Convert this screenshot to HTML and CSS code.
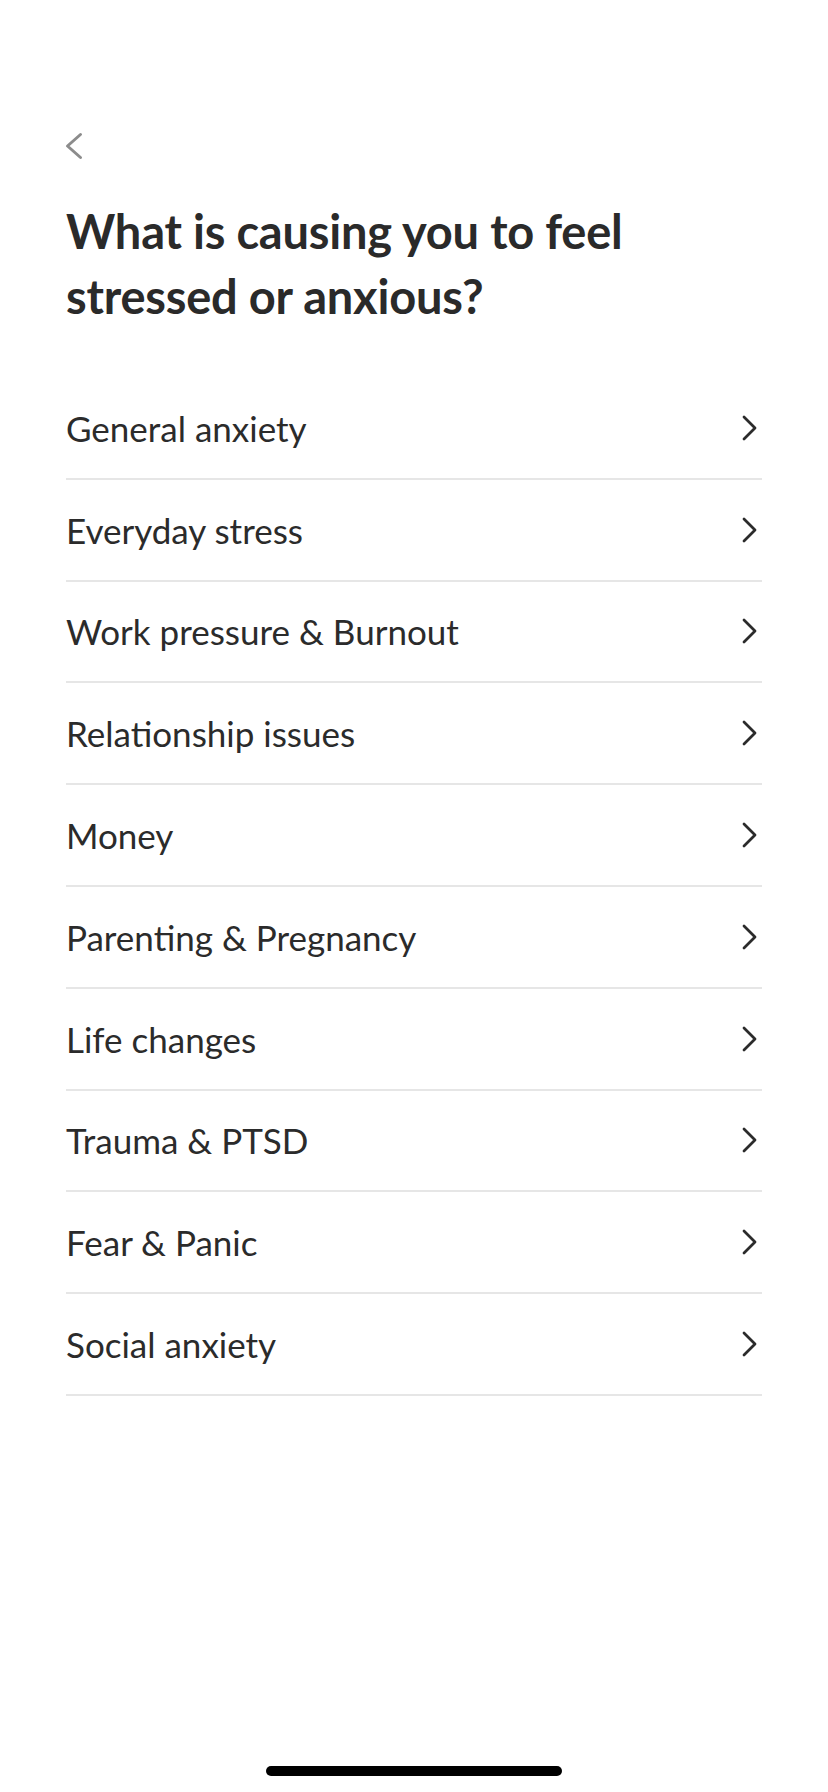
FILE: index.html
```html
<!DOCTYPE html>
<html lang="en">
<head>
  <meta charset="UTF-8" />
  <meta name="viewport" content="width=device-width, initial-scale=1.0" />
  <title>Stress & Anxiety</title>
  <link rel="stylesheet" href="styles.css">
</head>
<body>
  <div class="screen">
    <button class="back-btn" aria-label="Back">
      <svg width="18" height="28" viewBox="0 0 18 28">
        <polyline points="15.5,2.5 2.5,14 15.5,25.5" fill="none" stroke="#8c8c8c" stroke-width="3" stroke-linecap="round" stroke-linejoin="round" />
      </svg>
    </button>

    <h1 class="title">What is causing you to feel stressed or anxious?</h1>

    <ul class="topic-list">
      <li class="topic"><span>General anxiety</span><svg class="chev" width="16" height="26" viewBox="0 0 16 26"><polyline points="2,2 13,13 2,24" /></svg></li>
      <li class="topic"><span>Everyday stress</span><svg class="chev" width="16" height="26" viewBox="0 0 16 26"><polyline points="2,2 13,13 2,24" /></svg></li>
      <li class="topic"><span>Work pressure &amp; Burnout</span><svg class="chev" width="16" height="26" viewBox="0 0 16 26"><polyline points="2,2 13,13 2,24" /></svg></li>
      <li class="topic"><span>Relationship issues</span><svg class="chev" width="16" height="26" viewBox="0 0 16 26"><polyline points="2,2 13,13 2,24" /></svg></li>
      <li class="topic"><span>Money</span><svg class="chev" width="16" height="26" viewBox="0 0 16 26"><polyline points="2,2 13,13 2,24" /></svg></li>
      <li class="topic"><span>Parenting &amp; Pregnancy</span><svg class="chev" width="16" height="26" viewBox="0 0 16 26"><polyline points="2,2 13,13 2,24" /></svg></li>
      <li class="topic"><span>Life changes</span><svg class="chev" width="16" height="26" viewBox="0 0 16 26"><polyline points="2,2 13,13 2,24" /></svg></li>
      <li class="topic"><span>Trauma &amp; PTSD</span><svg class="chev" width="16" height="26" viewBox="0 0 16 26"><polyline points="2,2 13,13 2,24" /></svg></li>
      <li class="topic"><span>Fear &amp; Panic</span><svg class="chev" width="16" height="26" viewBox="0 0 16 26"><polyline points="2,2 13,13 2,24" /></svg></li>
      <li class="topic"><span>Social anxiety</span><svg class="chev" width="16" height="26" viewBox="0 0 16 26"><polyline points="2,2 13,13 2,24" /></svg></li>
    </ul>

    <div class="home-bar"></div>
  </div>
</body>
</html>
```

FILE: styles.css
```css
body {
  margin: 0;
  background: #fff;
  font-family: Lato, 'Noto Sans', sans-serif;
  color: #2b2b2b;
}
.screen {
  position: relative;
  width: 828px;
  height: 1792px;
  padding: 0 66px;
  box-sizing: border-box;
}
.back-btn {
  display: block;
  margin: 0 0 0 -1px;
  padding: 132px 0 0;
  border: none;
  background: none;
  cursor: pointer;
}
.back-btn svg {
  display: block;
}
.title {
  margin: 39px 0 0;
  font-size: 47px;
  line-height: 65px;
  letter-spacing: -0.2px;
  font-weight: 700;
  color: #2a2a2a;
}
.topic-list {
  list-style: none;
  margin: 49px 0 0;
  padding: 0;
}
.topic {
  display: flex;
  align-items: center;
  justify-content: space-between;
  height: 99.8px;
  border-bottom: 2px solid #e6e6e6;
  font-size: 35px;
  cursor: pointer;
}
.chev {
  margin-right: 4px;
}
.chev polyline {
  fill: none;
  stroke: #2b2b2b;
  stroke-width: 2.8;
  stroke-linecap: round;
  stroke-linejoin: round;
}
.home-bar {
  position: absolute;
  left: 266px;
  top: 1766px;
  width: 296px;
  height: 10px;
  border-radius: 5px;
  background: #000;
}
```
